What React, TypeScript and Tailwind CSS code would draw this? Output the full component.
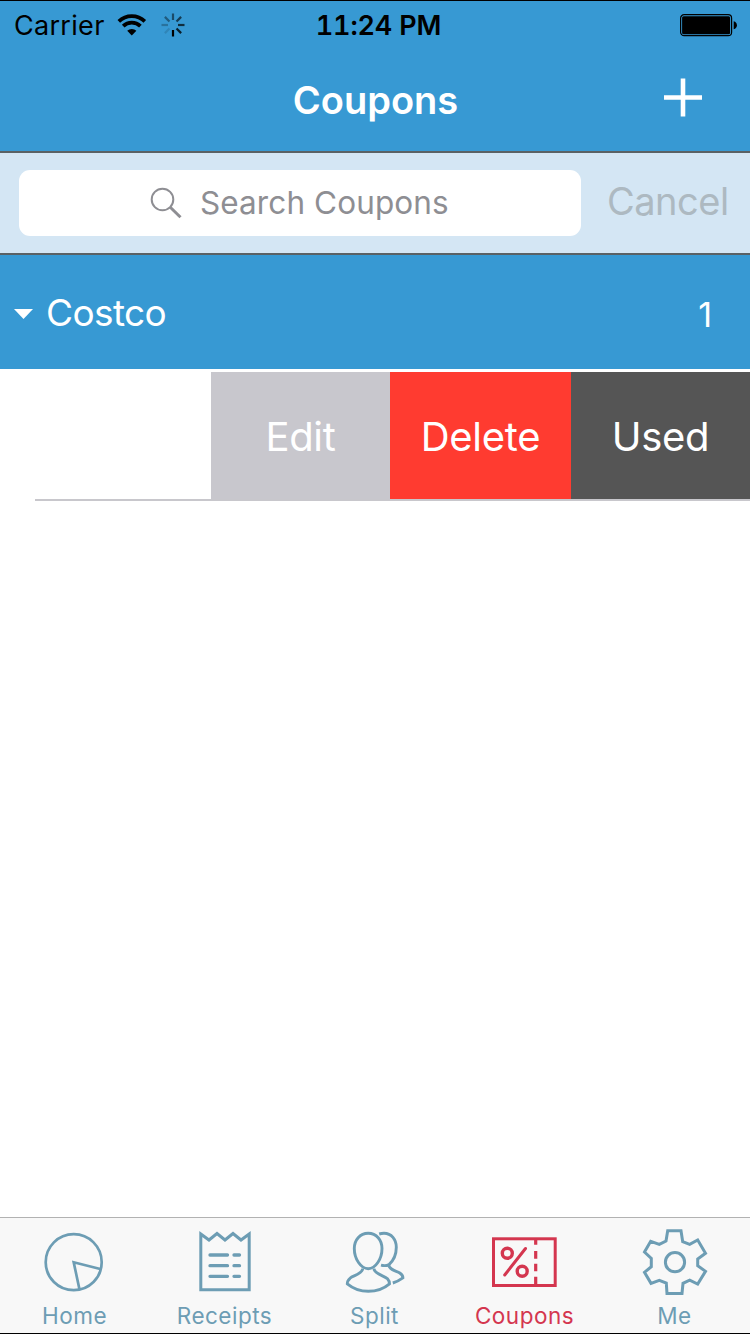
import type { ReactNode } from "react";

const spokes = [
  { angle: 0, opacity: 0.5 },
  { angle: 45, opacity: 0.6 },
  { angle: 90, opacity: 0.7 },
  { angle: 135, opacity: 0.8 },
  { angle: 180, opacity: 1 },
  { angle: 225, opacity: 0.12 },
  { angle: 270, opacity: 0.25 },
  { angle: 315, opacity: 0.4 },
];

function StatusBar() {
  return (
    <div className="grid h-[50px] grid-cols-3 items-center pl-[14px] pr-[13px] text-black">
      <div className="flex items-center">
        <span className="w-[103px] text-[27px] leading-[50px] tracking-[0.3px]">Carrier</span>
        <svg className="mb-[2px] h-[24px] w-[30px]" viewBox="0 0 30 24" fill="none" stroke="black">
          <path d="M1.800 8.400a18.600 18.600 0 0 1 26 0" strokeWidth="3.700" />
          <path d="M6.200 13.100a12.200 12.200 0 0 1 17.200 0" strokeWidth="3.700" />
          <path d="M14.800 22.500L10.200 17.800a6.500 6.500 0 0 1 9.200 0Z" fill="black" stroke="none" />
        </svg>
        <svg className="mb-[2px] ml-[14px] h-[24px] w-[24px]" viewBox="-12 -12 24 24" stroke="black" strokeWidth="2.200">
          {spokes.map((s) => (
            <line key={s.angle} x1="0" y1="-5" x2="0" y2="-11.500" opacity={s.opacity} transform={`rotate(${s.angle})`} />
          ))}
        </svg>
      </div>
      <div className="whitespace-nowrap pl-[6px] text-center text-[27px] font-semibold tabular-nums leading-[50px] tracking-[-0.15px]">11:24 PM</div>
      <svg className="mb-[2px] h-[24px] w-[58px] justify-self-end" viewBox="0 0 58 24">
        <rect x="1.600" y="1.700" width="51" height="21" rx="3.500" fill="none" stroke="black" strokeWidth="1.200" />
        <rect x="3.100" y="3.200" width="48" height="18" rx="1.500" />
        <path d="M54.700 8.200c2 .6 3.200 2 3.200 4s-1.200 3.400-3.200 4Z" />
      </svg>
    </div>
  );
}

function Tab({ label, active, children }: { label: string; active?: boolean; children: ReactNode }) {
  return (
    <button className={`flex flex-1 flex-col items-center ${active ? "text-[#d4364f]" : "text-[#6d9db4]"}`}>
      <svg className="mt-[8px] h-[72px] w-[72px] shrink-0" viewBox="0 0 72 72" fill="none" stroke="currentColor" strokeWidth="3">
        {children}
      </svg>
      <span className="pr-px text-[22.5px] leading-[36px] tracking-[0.5px]">{label}</span>
    </button>
  );
}

export default function App() {
  return (
    <div className="flex h-[1334px] w-[750px] flex-col overflow-hidden border-y border-black bg-white font-['Inter','Liberation_Sans',sans-serif]">
      <header className="h-[150px] bg-[#3799d3]">
        <StatusBar />
        <div className="grid h-[98px] grid-cols-3 items-center">
          <span />
          <h1 className="pl-px text-center text-[38px] font-semibold leading-[98px] text-white">Coupons</h1>
          <svg className="mb-[7px] mr-[47px] h-[40px] w-[40px] justify-self-end" viewBox="0 0 40 40" stroke="white" strokeWidth="4.600">
            <path d="M1 20.500H39M20 1.500V39.500" />
          </svg>
        </div>
      </header>

      <div className="flex h-[104px] items-center border-y-2 border-[#5a6164] bg-[#d4e6f4] pl-[19px]">
        <div className="flex h-[66px] w-[562px] items-center rounded-[11px] bg-white pl-[131px] text-[#8e8e93]">
          <svg className="h-[32px] w-[32px]" viewBox="0 0 32 32" fill="none" stroke="currentColor">
            <circle cx="12.500" cy="12.500" r="10.800" strokeWidth="2" />
            <path d="M20 20L30.500 30.300" strokeWidth="3" />
          </svg>
          <span className="ml-[18px] text-[31.5px] leading-[66px] tracking-[0.1px]">Search Coupons</span>
        </div>
        <button className="mb-[4px] ml-[26px] text-[38px] leading-[66px] tracking-[-0.5px] text-[#adb9c1]">Cancel</button>
      </div>

      <div className="flex h-[114px] items-center bg-[#3799d3] pl-[14px] pt-[4px] text-white">
        <svg className="h-[10px] w-[19px]" viewBox="0 0 19 10" fill="white">
          <path d="M0 0H19L9.500 10Z" />
        </svg>
        <span className="mb-[2px] ml-[13px] text-[37px] leading-[108px] tracking-[-0.6px]">Costco</span>
        <span className="ml-auto mr-[38px] text-[34px]">1</span>
      </div>

      <div className="mt-[3px] flex h-[127px] text-[40px] leading-[129px] tracking-[-0.3px] text-white">
        <div className="w-[211px]" />
        <button className="w-[179px] bg-[#c8c7cd]">Edit</button>
        <button className="w-[181px] bg-[#ff3b30]">Delete</button>
        <button className="w-[179px] bg-[#555555]">Used</button>
      </div>
      <div className="ml-[35px] h-[2px] bg-[#c8c7cc]" />

      <main className="flex-1" />

      <nav className="flex h-[116px] border-t border-[#b2b2b2] bg-[#f8f8f8]">
        <Tab label="Home">
          <circle cx="34.700" cy="36.200" r="28" strokeWidth="2.700" />
          <path d="M61.300 43L34.700 36.300L40.500 63.500" strokeWidth="2.700" />
        </Tab>
        <Tab label="Receipts">
          <path d="M11.800 8V63.800H60.200V8L52 14L44 7.500L36 14L28 7.500L20 14Z" />
          <path d="M21 29H38.500M45 29H50.500M21 39.700H38.500M45 39.700H50.500M21 50.300H38.500M45 50.300H50.500" strokeWidth="3.300" strokeLinecap="round" />
        </Tab>
        <Tab label="Split">
          <g strokeWidth="2.900">
            <path d="M29.200 7.300C37.500 7.300 43 14 43 22.500C43 33 36.500 42.700 29.200 42.700S15.300 33 15.300 22.500C15.300 14 20.900 7.300 29.200 7.300Z" />
            <path d="M23.700 42.500C23.700 48 14 49.500 11 52.300C9 54 8.300 56 8.300 57.800C14 62.500 21 65.300 29.300 65.300S45 62.500 50.500 57.800C50.500 56 50 54.500 48.500 52.800C45.500 49.500 34.900 48 34.900 42.500" />
            <path d="M40.200 8C41.800 7.500 43.300 7.300 45 7.300C52.500 7.300 57.300 13.500 57.300 21.300C57.300 29 53.500 35.500 50 38.600C47.500 39.900 44.800 39.900 42 39.200" />
            <path d="M49.600 39C51.300 45 57.500 44.800 60.800 47C63 48.500 64 50 63.900 51.900C61 54 57.800 55.800 53.800 57" />
          </g>
        </Tab>
        <Tab label="Coupons" active>
          <rect x="4.500" y="12.800" width="61.700" height="46.700" />
          <path d="M46.700 14V18.700M46.700 25V32.700M46.700 37.700V45.300M46.700 50.700V59" strokeWidth="3.200" />
          <circle cx="18.300" cy="27.300" r="5" strokeWidth="3.400" />
          <circle cx="33.200" cy="45.300" r="5" strokeWidth="3.400" />
          <path d="M36.500 22.500L15.700 49" strokeLinecap="round" />
        </Tab>
        <Tab label="Me">
          <circle cx="36" cy="36.200" r="9.600" />
          <path d="M28.700 4.700H42L43.700 15.700L50.700 18.300L58.700 14L66.500 27.300L58.700 33V39.700L66.500 45.300L58.700 58L50.700 54.200L44 57.300L43 67.500H28L27.300 57L20.300 54.300L12 57.300L5.500 46.300L12.300 40.700V32.300L5.500 26L11.700 15.300L20.300 18.300L27 15Z" />
        </Tab>
      </nav>
    </div>
  );
}
